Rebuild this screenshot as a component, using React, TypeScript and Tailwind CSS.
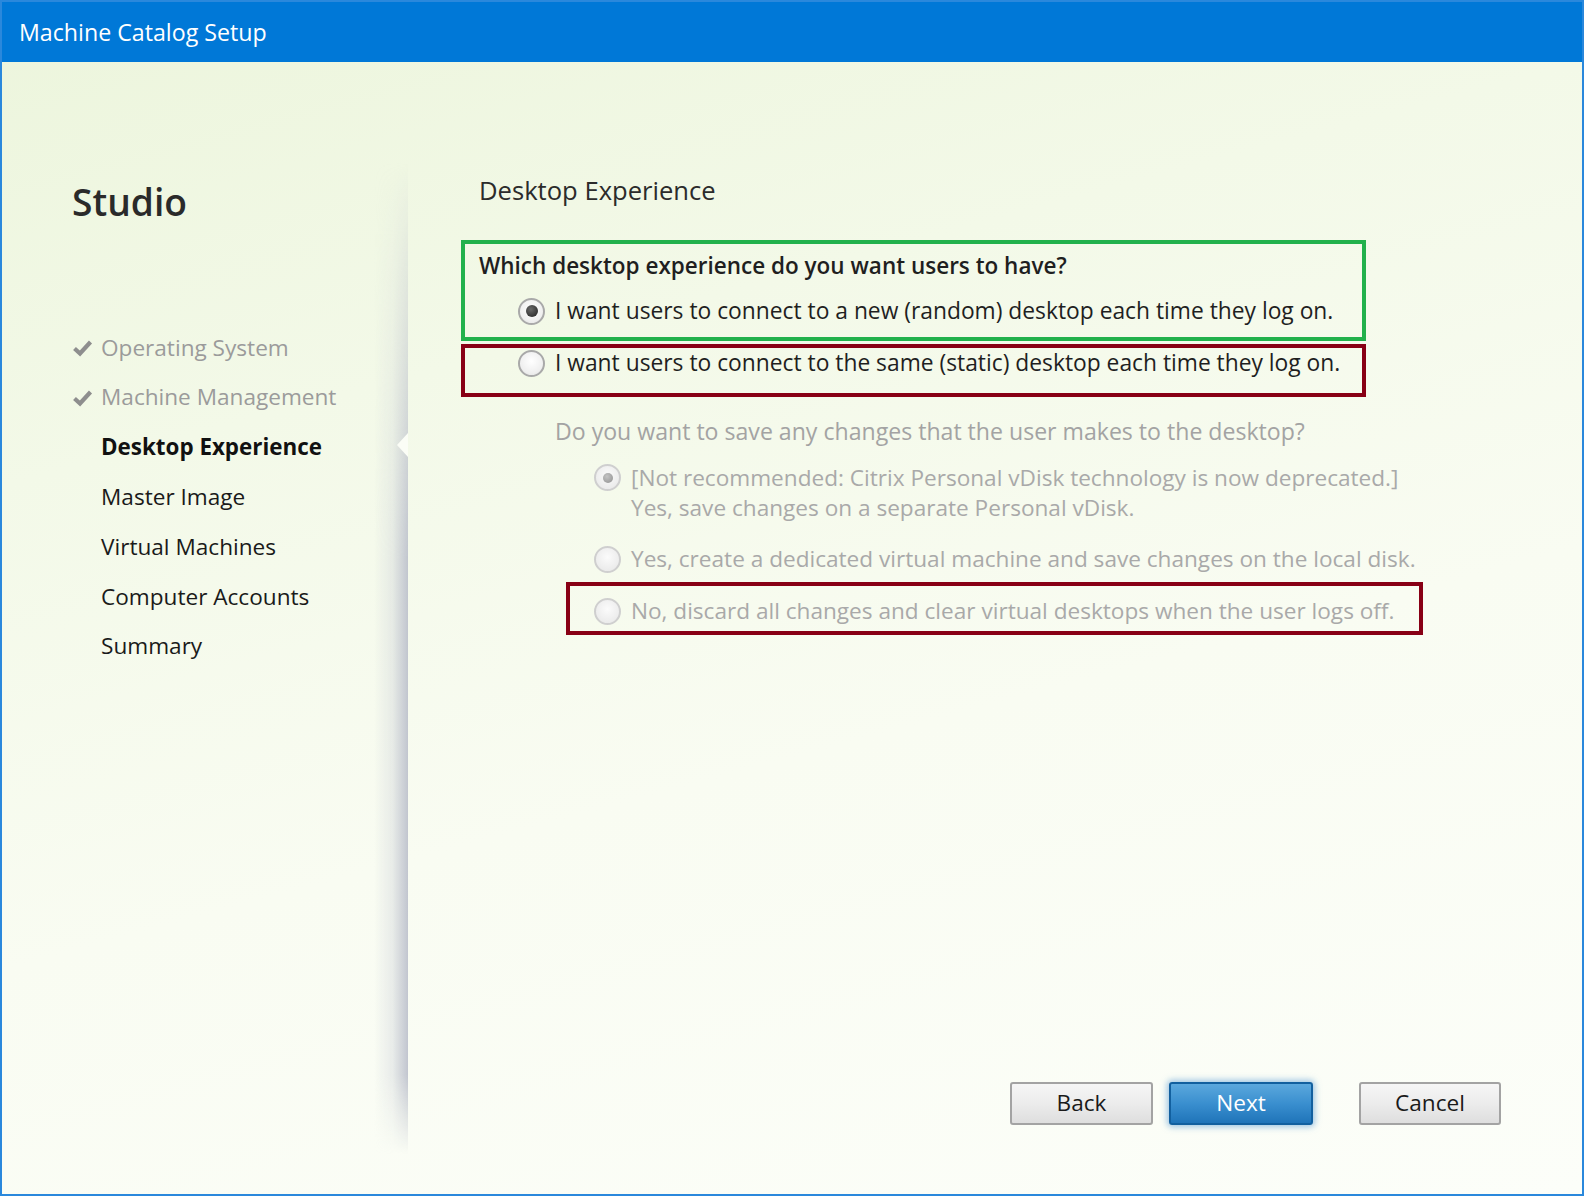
import React from "react";

const FONT = "font-['Open_Sans','Noto_Sans',sans-serif]";

function Check() {
  return (
    <svg width="21" height="18" viewBox="0 0 21 18" className="shrink-0">
      <path d="M2.5 9.5 L8 14.5 L18.5 3" fill="none" stroke="#8e8e8e" strokeWidth="4.2" strokeLinejoin="miter" />
    </svg>
  );
}

function Radio({ checked, disabled }: { checked?: boolean; disabled?: boolean }) {
  return (
    <span
      className={
        disabled
          ? "flex h-[27px] w-[27px] shrink-0 items-center justify-center rounded-full border-2 border-[#cfcfcf] bg-[radial-gradient(circle_at_50%_40%,#fbfbfb_0%,#ececec_70%,#e2e2e2_100%)]"
          : "flex h-[27px] w-[27px] shrink-0 items-center justify-center rounded-full border-2 border-[#a9a9a9] bg-[radial-gradient(circle_at_50%_40%,#ffffff_0%,#efefef_65%,#dcdcdc_100%)]"
      }
    >
      {checked && (
        <span
          className={
            disabled
              ? "h-[10px] w-[10px] rounded-full bg-[radial-gradient(circle_at_40%_35%,#c4c4c4,#8f8f8f)]"
              : "h-[12px] w-[12px] rounded-full bg-[radial-gradient(circle_at_40%_35%,#6a6a6a,#1e1e1e)]"
          }
        />
      )}
    </span>
  );
}

const navItems: { label: string; state: "done" | "current" | "todo" }[] = [
  { label: "Operating System", state: "done" },
  { label: "Machine Management", state: "done" },
  { label: "Desktop Experience", state: "current" },
  { label: "Master Image", state: "todo" },
  { label: "Virtual Machines", state: "todo" },
  { label: "Computer Accounts", state: "todo" },
  { label: "Summary", state: "todo" },
];

export default function App() {
  return (
    <div
      className={`${FONT} flex h-[1196px] w-[1584px] flex-col overflow-hidden border-2 border-[#2a88dc] bg-[linear-gradient(165deg,#ecf5dc_0%,#f3f9e8_30%,#f9fcf2_60%,#fcfef9_100%)]`}
    >
      {/* Title bar */}
      <div className="flex h-[60px] shrink-0 items-center bg-[#0078d7] pl-[17px] pt-[1px]">
        <span className="text-[23.2px] leading-none text-white">Machine Catalog Setup</span>
      </div>

      <div className="flex flex-1">
        {/* Sidebar */}
        <div className="relative flex w-[406px] shrink-0 flex-col pl-[70px] pt-[118px]">
          <div className="h-[44px] text-[37.2px] font-semibold leading-[44px] text-[#2a2a2a]">Studio</div>
          <div className="mt-[99px] flex flex-col">
            {navItems.map((item) => (
              <div key={item.label} className="flex h-[49.8px] items-center">
                <span className="flex w-[29px] items-center">{item.state === "done" && <Check />}</span>
                <span
                  className={
                    item.state === "done"
                      ? "text-[22.6px] leading-none text-[#9b9b9b]"
                      : item.state === "current"
                      ? "text-[22.4px] font-bold leading-none text-[#111111]"
                      : "text-[22.6px] leading-none text-[#1a1a1a]"
                  }
                >
                  {item.label}
                </span>
              </div>
            ))}
          </div>

          {/* right edge shadow */}
          <div className="absolute right-0 top-[100px] bottom-[40px] w-[34px] bg-[linear-gradient(to_right,rgba(200,204,214,0)_0%,rgba(200,204,214,0.35)_55%,rgba(190,194,205,0.95)_100%)] [mask-image:linear-gradient(to_bottom,transparent_0%,rgba(0,0,0,0.35)_12%,black_40%,black_92%,transparent_100%)]" />
          {/* pointer notch */}
          <div className="absolute right-0 top-[371px] h-0 w-0 border-y-[12px] border-r-[11px] border-y-transparent border-r-[#fbfdf6]" />
        </div>

        {/* Content */}
        <div className="flex flex-1 flex-col pt-[112px] pr-[81px] pb-[69px]">
          <div className="ml-[71px] h-[34px] text-[25.6px] leading-[34px] text-[#2b2b2b]">Desktop Experience</div>

          {/* Green box */}
          <div className="ml-[53px] mt-[32px] w-[905px] border-4 border-[#22b14c] pb-[10px] pl-[14px] pt-[6px]">
            <div className="h-[32px] text-[22.5px] font-semibold leading-[32px] text-[#1f1f1f]">
              Which desktop experience do you want users to have?
            </div>
            <div className="mt-[13px] flex h-[32px] items-center pl-[39px]">
              <Radio checked />
              <span className="ml-[10px] text-[22.8px] leading-[32px] text-[#1f1f1f]">
                I want users to connect to a new (random) desktop each time they log on.
              </span>
            </div>
          </div>

          {/* Red box 1 */}
          <div className="ml-[53px] mt-[3px] w-[905px] border-4 border-[#880015] pb-[15px] pl-[53px]">
            <div className="flex h-[30px] items-center">
              <Radio />
              <span className="ml-[10px] text-[22.8px] leading-[30px] text-[#1f1f1f]">
                I want users to connect to the same (static) desktop each time they log on.
              </span>
            </div>
          </div>

          <div className="ml-[147px] mt-[18px] h-[32px] text-[23.1px] leading-[32px] text-[#a3a3a3]">
            Do you want to save any changes that the user makes to the desktop?
          </div>

          <div className="ml-[186px] mt-[16px] flex items-start">
            <span className="mt-[1px]">
              <Radio checked disabled />
            </span>
            <div className="ml-[10px] text-[22.6px] leading-[30px] text-[#a9a9a9]">
              <div>[Not recommended: Citrix Personal vDisk technology is now deprecated.]</div>
              <div>Yes, save changes on a separate Personal vDisk.</div>
            </div>
          </div>

          <div className="ml-[186px] mt-[21px] flex h-[30px] items-center">
            <Radio disabled />
            <span className="ml-[10px] text-[22.6px] leading-[30px] text-[#a9a9a9]">
              Yes, create a dedicated virtual machine and save changes on the local disk.
            </span>
          </div>

          {/* Red box 2 */}
          <div className="ml-[158px] mt-[8px] w-[857px] border-4 border-[#880015] pb-[5px] pl-[24px] pt-[10px]">
            <div className="flex h-[30px] items-center">
              <Radio disabled />
              <span className="ml-[10px] text-[22.6px] leading-[30px] text-[#a9a9a9]">
                No, discard all changes and clear virtual desktops when the user logs off.
              </span>
            </div>
          </div>

          {/* Buttons */}
          <div className="mt-auto flex justify-end">
            <button className="flex h-[43px] w-[143px] items-center justify-center rounded-[3px] border-2 border-[#a3a3a3] bg-[linear-gradient(to_bottom,#f6f6f6_0%,#ececec_50%,#dedede_100%)] text-[22.6px] leading-none text-[#1a1a1a]">
              Back
            </button>
            <button className="ml-[16px] flex h-[43px] w-[144px] items-center justify-center rounded-[3px] border-2 border-[#12609f] bg-[linear-gradient(to_bottom,#5ba8dd_0%,#3a8fcf_50%,#1f74b9_100%)] text-[22.6px] leading-none text-white shadow-[0_0_6px_2px_rgba(80,150,210,0.55)]">
              Next
            </button>
            <button className="ml-[46px] flex h-[43px] w-[142px] items-center justify-center rounded-[3px] border-2 border-[#a3a3a3] bg-[linear-gradient(to_bottom,#f6f6f6_0%,#ececec_50%,#dedede_100%)] text-[22.6px] leading-none text-[#1a1a1a]">
              Cancel
            </button>
          </div>
        </div>
      </div>
    </div>
  );
}
